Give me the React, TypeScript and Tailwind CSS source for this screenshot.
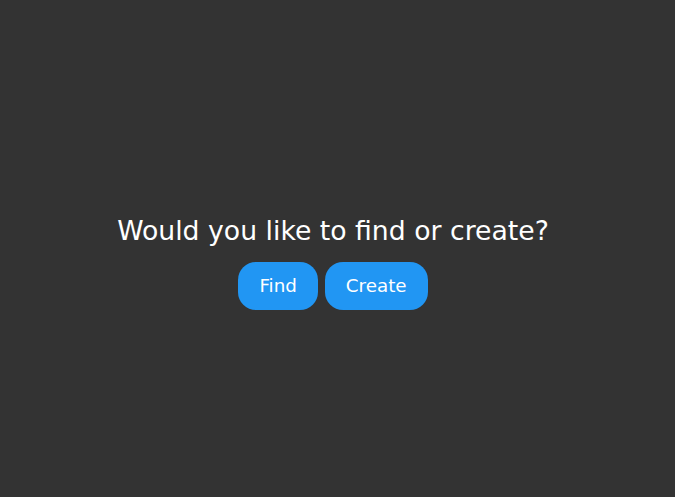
export default function App() {
  return (
    <div className="min-h-screen w-full bg-[#333333] flex flex-col items-center justify-center pt-[26px] pr-[9px] text-white font-['DejaVu_Sans',sans-serif]">
      <h1 className="text-[26.7px] leading-[36px] mb-[13px]">Would you like to find or create?</h1>
      <div className="flex gap-[7px]">
        <button className="h-[48px] px-[21px] rounded-[18px] bg-[#2196f3] text-[18.3px] text-white">Find</button>
        <button className="h-[48px] px-[21px] rounded-[18px] bg-[#2196f3] text-[18.3px] text-white">Create</button>
      </div>
    </div>
  );
}
